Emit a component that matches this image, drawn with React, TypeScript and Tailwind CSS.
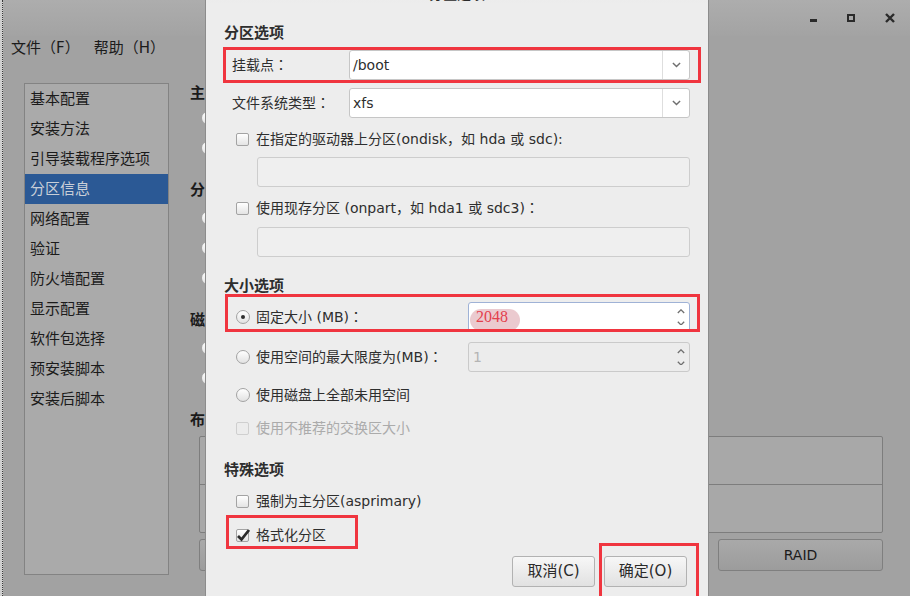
import React from "react";

const sideItems = [
  "基本配置",
  "安装方法",
  "引导装载程序选项",
  "分区信息",
  "网络配置",
  "验证",
  "防火墙配置",
  "显示配置",
  "软件包选择",
  "预安装脚本",
  "安装后脚本",
];

// centred full-width colon, as the GTK font draws it
const Colon = () => <span className="font-['Noto_Sans_CJK_JP',sans-serif]">：</span>;

const Chevron = ({ up = false, size = 9 }: { up?: boolean; size?: number }) => (
  <svg width={size} height={size * 0.6} viewBox="0 0 10 6" className="block">
    <path
      d={up ? "M1 5 L5 1 L9 5" : "M1 1 L5 5 L9 1"}
      fill="none"
      stroke="#6f6f6f"
      strokeWidth="1.6"
    />
  </svg>
);

const Check = ({ checked = false, disabled = false }: { checked?: boolean; disabled?: boolean }) => (
  <span
    className={`relative w-[13px] h-[13px] shrink-0 rounded-[2px] border ${
      disabled ? "border-[#cfcfcf] bg-[#ececec]" : "border-[#a3a3a3] bg-gradient-to-b from-white to-[#e4e4e4]"
    }`}
  >
    {checked && (
      <svg width="15" height="14" viewBox="0 0 15 14" className="absolute left-[-1px] top-[-2px]">
        <path d="M2 8 L5.5 11.5 L13 2" fill="none" stroke="#2b2b2b" strokeWidth="2.8" />
      </svg>
    )}
  </span>
);

const Radio = ({ checked = false }: { checked?: boolean }) => (
  <span className="w-[14px] h-[14px] shrink-0 rounded-full border border-[#a3a3a3] bg-gradient-to-b from-white to-[#e2e2e2] flex items-center justify-center">
    {checked && <span className="w-[4px] h-[4px] rounded-full bg-[#2e2e2e]" />}
  </span>
);

const Combo = ({ value }: { value: string }) => (
  <div className="flex h-[30px] w-[341px] rounded-[3px] border border-[#c6c6c6] bg-white">
    <div className="flex-1 flex items-center pl-[3px] text-[14px] text-[#2e2e2e]">{value}</div>
    <div className="w-[27px] border-l border-[#dedede] flex items-center justify-center">
      <Chevron />
    </div>
  </div>
);

const Spin = ({ value, focused = false }: { value: string; focused?: boolean }) => (
  <div
    className={`flex h-[30px] w-[222px] rounded-[3px] border ${
      focused ? "border-[#9fb2d6] bg-white" : "border-[#cacaca] bg-[#ececec]"
    }`}
  >
    <div className="relative flex-1 flex items-center pl-[4px]">
      {focused ? (
        <>
          <span className="absolute left-[1px] top-[6px] w-[50px] h-[22px] rounded-full bg-[#e2b3bb]/70" />
          <span className="relative pl-[3px] text-[16px] text-[#e3404c] font-['Liberation_Serif',serif]">{value}</span>
        </>
      ) : (
        <span className="text-[14px] text-[#b4b4b4]">{value}</span>
      )}
    </div>
    <div className="w-[16px] flex flex-col items-center justify-center gap-[7px]">
      <Chevron up size={8} />
      <Chevron size={8} />
    </div>
  </div>
);

const Btn = ({ label }: { label: string }) => (
  <div className="w-[83px] h-[31px] rounded-[3px] border border-[#b2b2b2] bg-gradient-to-b from-[#f7f7f7] to-[#e1e1e1] flex items-center justify-center text-[15px] text-[#2a2a2a]">
    {label}
  </div>
);

export default function App() {
  return (
    <div className="relative w-[910px] h-[596px] overflow-hidden bg-[#a2a2a2] font-['DejaVu_Sans','Noto_Sans_CJK_SC',sans-serif] text-[#1b1b1b]">
      {/* background window */}
      <div className="absolute left-0 top-0 bottom-0 w-[3px] bg-[#cfcfcf] border-r border-dotted border-[#3a3a3a]" />
      <div className="h-[36px] bg-gradient-to-b from-[#adadad] to-[#a3a3a3] flex items-center justify-end pr-[15px] gap-[30px]">
        <span className="w-[7px] h-[3px] bg-[#2a2a2a] mt-[4px]" />
        <span className="w-[8px] h-[8px] border-2 border-[#2a2a2a]" />
        <svg width="10" height="10" viewBox="0 0 10 10">
          <path d="M1 1 L9 9 M9 1 L1 9" stroke="#2a2a2a" strokeWidth="2.4" />
        </svg>
      </div>
      <div className="h-[24px] flex items-center gap-[14px] pl-[11px] text-[15px]">
        <span>文件（F）</span>
        <span>帮助（H）</span>
      </div>
      <div className="flex pl-[24px] pt-[23px]">
        <div className="w-[145px] h-[492px] border border-[#838383] bg-[#aaaaaa] text-[15px]">
          {sideItems.map((item, i) => (
            <div
              key={item}
              className={`h-[30px] flex items-center pl-[5px] ${i === 3 ? "bg-[#2b5995] text-[#c9cfd8]" : ""}`}
            >
              {item}
            </div>
          ))}
        </div>
        <div className="ml-[21px] flex-1 flex flex-col text-[15px]">
          <div className="h-[20px] leading-[20px] font-bold">主</div>
          <div className="h-[30px] flex items-center pl-[11px]"><Radio /></div>
          <div className="h-[30px] flex items-center pl-[11px]"><Radio /></div>
          <div className="mt-[17px] h-[20px] leading-[20px] font-bold">分</div>
          <div className="mt-[3px] h-[30px] flex items-center pl-[11px]"><Radio /></div>
          <div className="h-[30px] flex items-center pl-[11px]"><Radio /></div>
          <div className="h-[30px] flex items-center pl-[11px]"><Radio /></div>
          <div className="mt-[17px] h-[20px] leading-[20px] font-bold">磁</div>
          <div className="mt-[3px] h-[30px] flex items-center pl-[11px]"><Radio /></div>
          <div className="h-[30px] flex items-center pl-[11px]"><Radio /></div>
          <div className="mt-[17px] h-[20px] leading-[20px] font-bold">布</div>
          <div className="mt-[6px] ml-[9px] mr-[27px] h-[97px] rounded-[2px] border border-[#7d7d7d] bg-[#a8a8a8] flex flex-col">
            <div className="h-[48px] border-b border-[#7d7d7d]" />
          </div>
          <div className="mt-[6px] ml-[9px] mr-[27px] flex gap-[10px]">
            <div className="flex-1 h-[32px] rounded-[3px] border border-[#7f7f7f] bg-gradient-to-b from-[#a9a9a9] to-[#9c9c9c]" />
            <div className="w-[165px] h-[32px] rounded-[3px] border border-[#7f7f7f] bg-gradient-to-b from-[#a9a9a9] to-[#9c9c9c] flex items-center justify-center text-[14px]">
              RAID
            </div>
          </div>
        </div>
      </div>

      {/* partition dialog */}
      <div className="absolute left-[205px] top-[-28px] w-[504px] h-[640px] bg-[#ededed] border-x border-[#8c8c8c] text-[#2e2e2e] text-[14px]">
        <div className="h-[32px] flex items-end justify-center bg-gradient-to-b from-[#e6e6e6] to-[#ededed]">
          <span className="leading-[20px] font-bold text-[14px] text-[#2a2a2a]">分区选项</span>
        </div>
        <div className="px-[18px] pt-[19px] flex flex-col">
          <div className="h-[20px] leading-[20px] font-bold text-[15px]">分区选项</div>
          <div className="mt-[7px] flex items-center pl-[8px]">
            <span className="w-[117px]">挂载点<Colon /></span>
            <Combo value="/boot" />
          </div>
          <div className="mt-[8px] flex items-center pl-[8px]">
            <span className="w-[117px]">文件系统类型<Colon /></span>
            <Combo value="xfs" />
          </div>
          <div className="mt-[11px] h-[20px] flex items-center pl-[12px] gap-[7px]">
            <Check />
            <span>在指定的驱动器上分区(ondisk，如 hda 或 sdc):</span>
          </div>
          <div className="mt-[8px] ml-[33px] h-[30px] rounded-[3px] border border-[#cdcdcd] bg-[#efefef]" />
          <div className="mt-[11px] h-[20px] flex items-center pl-[12px] gap-[7px]">
            <Check />
            <span>使用现存分区 (onpart，如 hda1 或 sdc3)<Colon /></span>
          </div>
          <div className="mt-[9px] ml-[33px] h-[30px] rounded-[3px] border border-[#cdcdcd] bg-[#efefef]" />
          <div className="mt-[19px] h-[20px] leading-[20px] font-bold text-[15px]">大小选项</div>
          <div className="mt-[6px] flex items-center pl-[12px]">
            <Radio checked />
            <span className="ml-[6px] flex-1">固定大小 (MB)<Colon /></span>
            <Spin value="2048" focused />
          </div>
          <div className="mt-[10px] flex items-center pl-[12px]">
            <Radio />
            <span className="ml-[6px] flex-1">使用空间的最大限度为(MB)<Colon /></span>
            <Spin value="1" />
          </div>
          <div className="mt-[13px] h-[20px] flex items-center pl-[12px]">
            <Radio />
            <span className="ml-[6px]">使用磁盘上全部未用空间</span>
          </div>
          <div className="mt-[13px] h-[20px] flex items-center pl-[12px] gap-[7px]">
            <Check disabled />
            <span className="text-[#ababab]">使用不推荐的交换区大小</span>
          </div>
          <div className="mt-[22px] h-[20px] leading-[20px] font-bold text-[15px]">特殊选项</div>
          <div className="mt-[11px] h-[20px] flex items-center pl-[12px] gap-[7px]">
            <Check />
            <span>强制为主分区(asprimary)</span>
          </div>
          <div className="mt-[14px] h-[20px] flex items-center pl-[12px] gap-[7px]">
            <Check checked />
            <span>格式化分区</span>
          </div>
          <div className="mt-[11px] flex justify-end gap-[9px] pr-[3px]">
            <Btn label="取消(C)" />
            <Btn label="确定(O)" />
          </div>
        </div>

        {/* red annotation boxes */}
        <div className="absolute left-[17px] top-[75px] w-[478px] h-[36px] border-[3px] border-[#f0353f]" />
        <div className="absolute left-[19px] top-[322px] w-[475px] h-[38px] border-[3px] border-[#f0353f]" />
        <div className="absolute left-[20px] top-[543px] w-[132px] h-[34px] border-[3px] border-[#f0353f]" />
        <div className="absolute left-[393px] top-[571px] w-[100px] h-[70px] border-[3px] border-[#f0353f]" />
      </div>
    </div>
  );
}
